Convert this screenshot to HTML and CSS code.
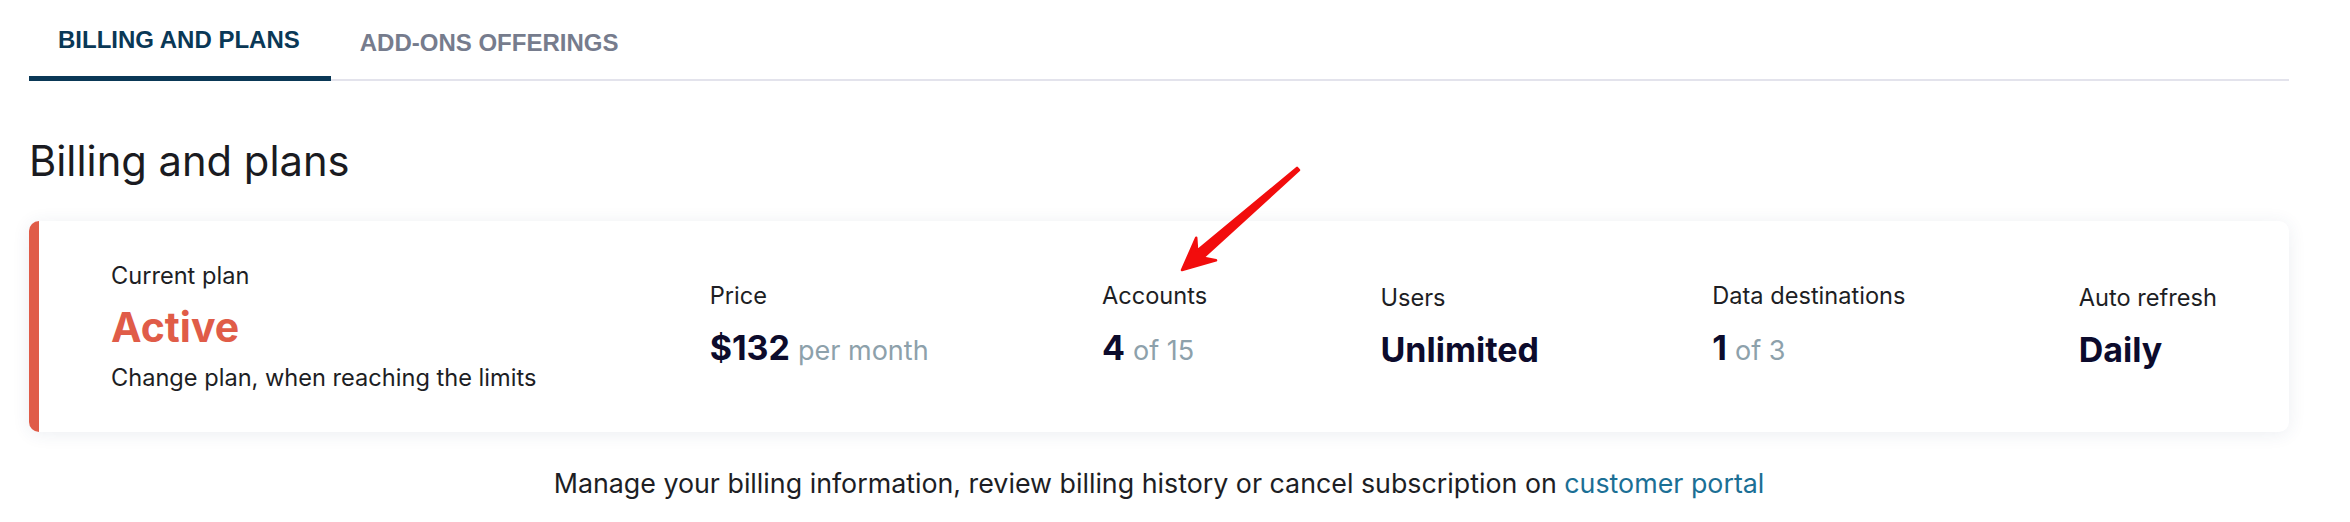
FILE: index.html
```html
<!DOCTYPE html>
<html lang="en">
<head>
<meta charset="utf-8">
<title>Billing and plans</title>
<link rel="stylesheet" href="styles.css">
</head>
<body>
<div class="page">
  <nav class="tabs">
    <a class="tab active" href="#">BILLING AND PLANS</a>
    <a class="tab" href="#">ADD-ONS OFFERINGS</a>
  </nav>

  <h1 class="title">Billing and plans</h1>

  <section class="plan-card">
    <div class="current">
      <div class="label">Current plan</div>
      <div class="status">Active</div>
      <div class="label">Change plan, when reaching the limits</div>
    </div>
    <div class="stat">
      <div class="label">Price</div>
      <div class="value">$132 <span class="sub">per month</span></div>
    </div>
    <div class="stat">
      <div class="label">Accounts</div>
      <div class="value">4 <span class="sub">of 15</span></div>
    </div>
    <div class="stat">
      <div class="label">Users</div>
      <div class="value">Unlimited</div>
    </div>
    <div class="stat">
      <div class="label">Data destinations</div>
      <div class="value">1 <span class="sub">of 3</span></div>
    </div>
    <div class="stat">
      <div class="label">Auto refresh</div>
      <div class="value">Daily</div>
    </div>
  </section>

  <p class="note">Manage your billing information, review billing history or cancel subscription on <a href="#" class="link">customer portal</a></p>
</div>

<svg class="arrow" width="140" height="120" viewBox="0 0 140 120" aria-hidden="true">
  <polygon points="12,110 46,100.3 33.1,97.6 129,10.1 127,7.9 27.1,90.8 26.2,77.7" fill="#f20d0d" stroke="#f20d0d" stroke-width="2.5" stroke-linejoin="round"/>
</svg>
</body>
</html>
```

FILE: styles.css
```css
html, body {
  margin: 0;
  padding: 0;
  background: #ffffff;
}

body {
  font-family: "Inter", "Liberation Sans", sans-serif;
  color: #1d1e24;
  position: relative;
}

.page {
  width: 2260px;
  padding-left: 29px;
}

/* Tabs */
.tabs {
  display: flex;
  align-items: flex-end;
  box-shadow: inset 0 -2px 0 #e3e3ec;
}

.tab {
  display: block;
  padding: 26px 31px 22px 29px;
  font-family: "Liberation Sans", Arial, sans-serif;
  font-size: 24px;
  line-height: 28px;
  font-weight: 700;
  color: #767c8d;
  text-decoration: none;
  border-bottom: 2px solid transparent;
}

.tab.active {
  color: #0a3856;
  border-bottom: 5px solid #0a3856;
}

/* Heading */
.title {
  margin: 56px 0 36px;
  font-size: 41.7px;
  line-height: 48px;
  font-weight: 400;
  color: #1a1b21;
}

/* Card */
.plan-card {
  height: 211px;
  box-sizing: border-box;
  display: flex;
  align-items: center;
  justify-content: space-between;
  padding: 0 72px;
  background: #ffffff;
  border-left: 10px solid #e05c48;
  border-radius: 10px;
  box-shadow: 0 2px 18px rgba(40, 70, 110, 0.09);
}

.current {
  display: flex;
  flex-direction: column;
  gap: 12px;
}

.label {
  font-size: 23.6px;
  line-height: 28px;
  color: #1d1e24;
  white-space: nowrap;
}

.status {
  font-size: 41px;
  line-height: 50px;
  font-weight: 700;
  color: #e05c48;
}

.stat {
  display: flex;
  flex-direction: column;
  gap: 18px;
}

.value {
  font-size: 34px;
  line-height: 40px;
  font-weight: 700;
  color: #0c0b2c;
  white-space: nowrap;
}

.sub {
  font-size: 27px;
  font-weight: 400;
  color: #8da1ab;
}

/* Footer note */
.note {
  margin: 35px 0 0;
  text-align: center;
  font-size: 26.8px;
  line-height: 32px;
  color: #1d1e24;
}

.link {
  color: #1b6f95;
  text-decoration: none;
}

/* Annotation arrow */
.arrow {
  position: absolute;
  left: 1170px;
  top: 160px;
  overflow: visible;
}
```
